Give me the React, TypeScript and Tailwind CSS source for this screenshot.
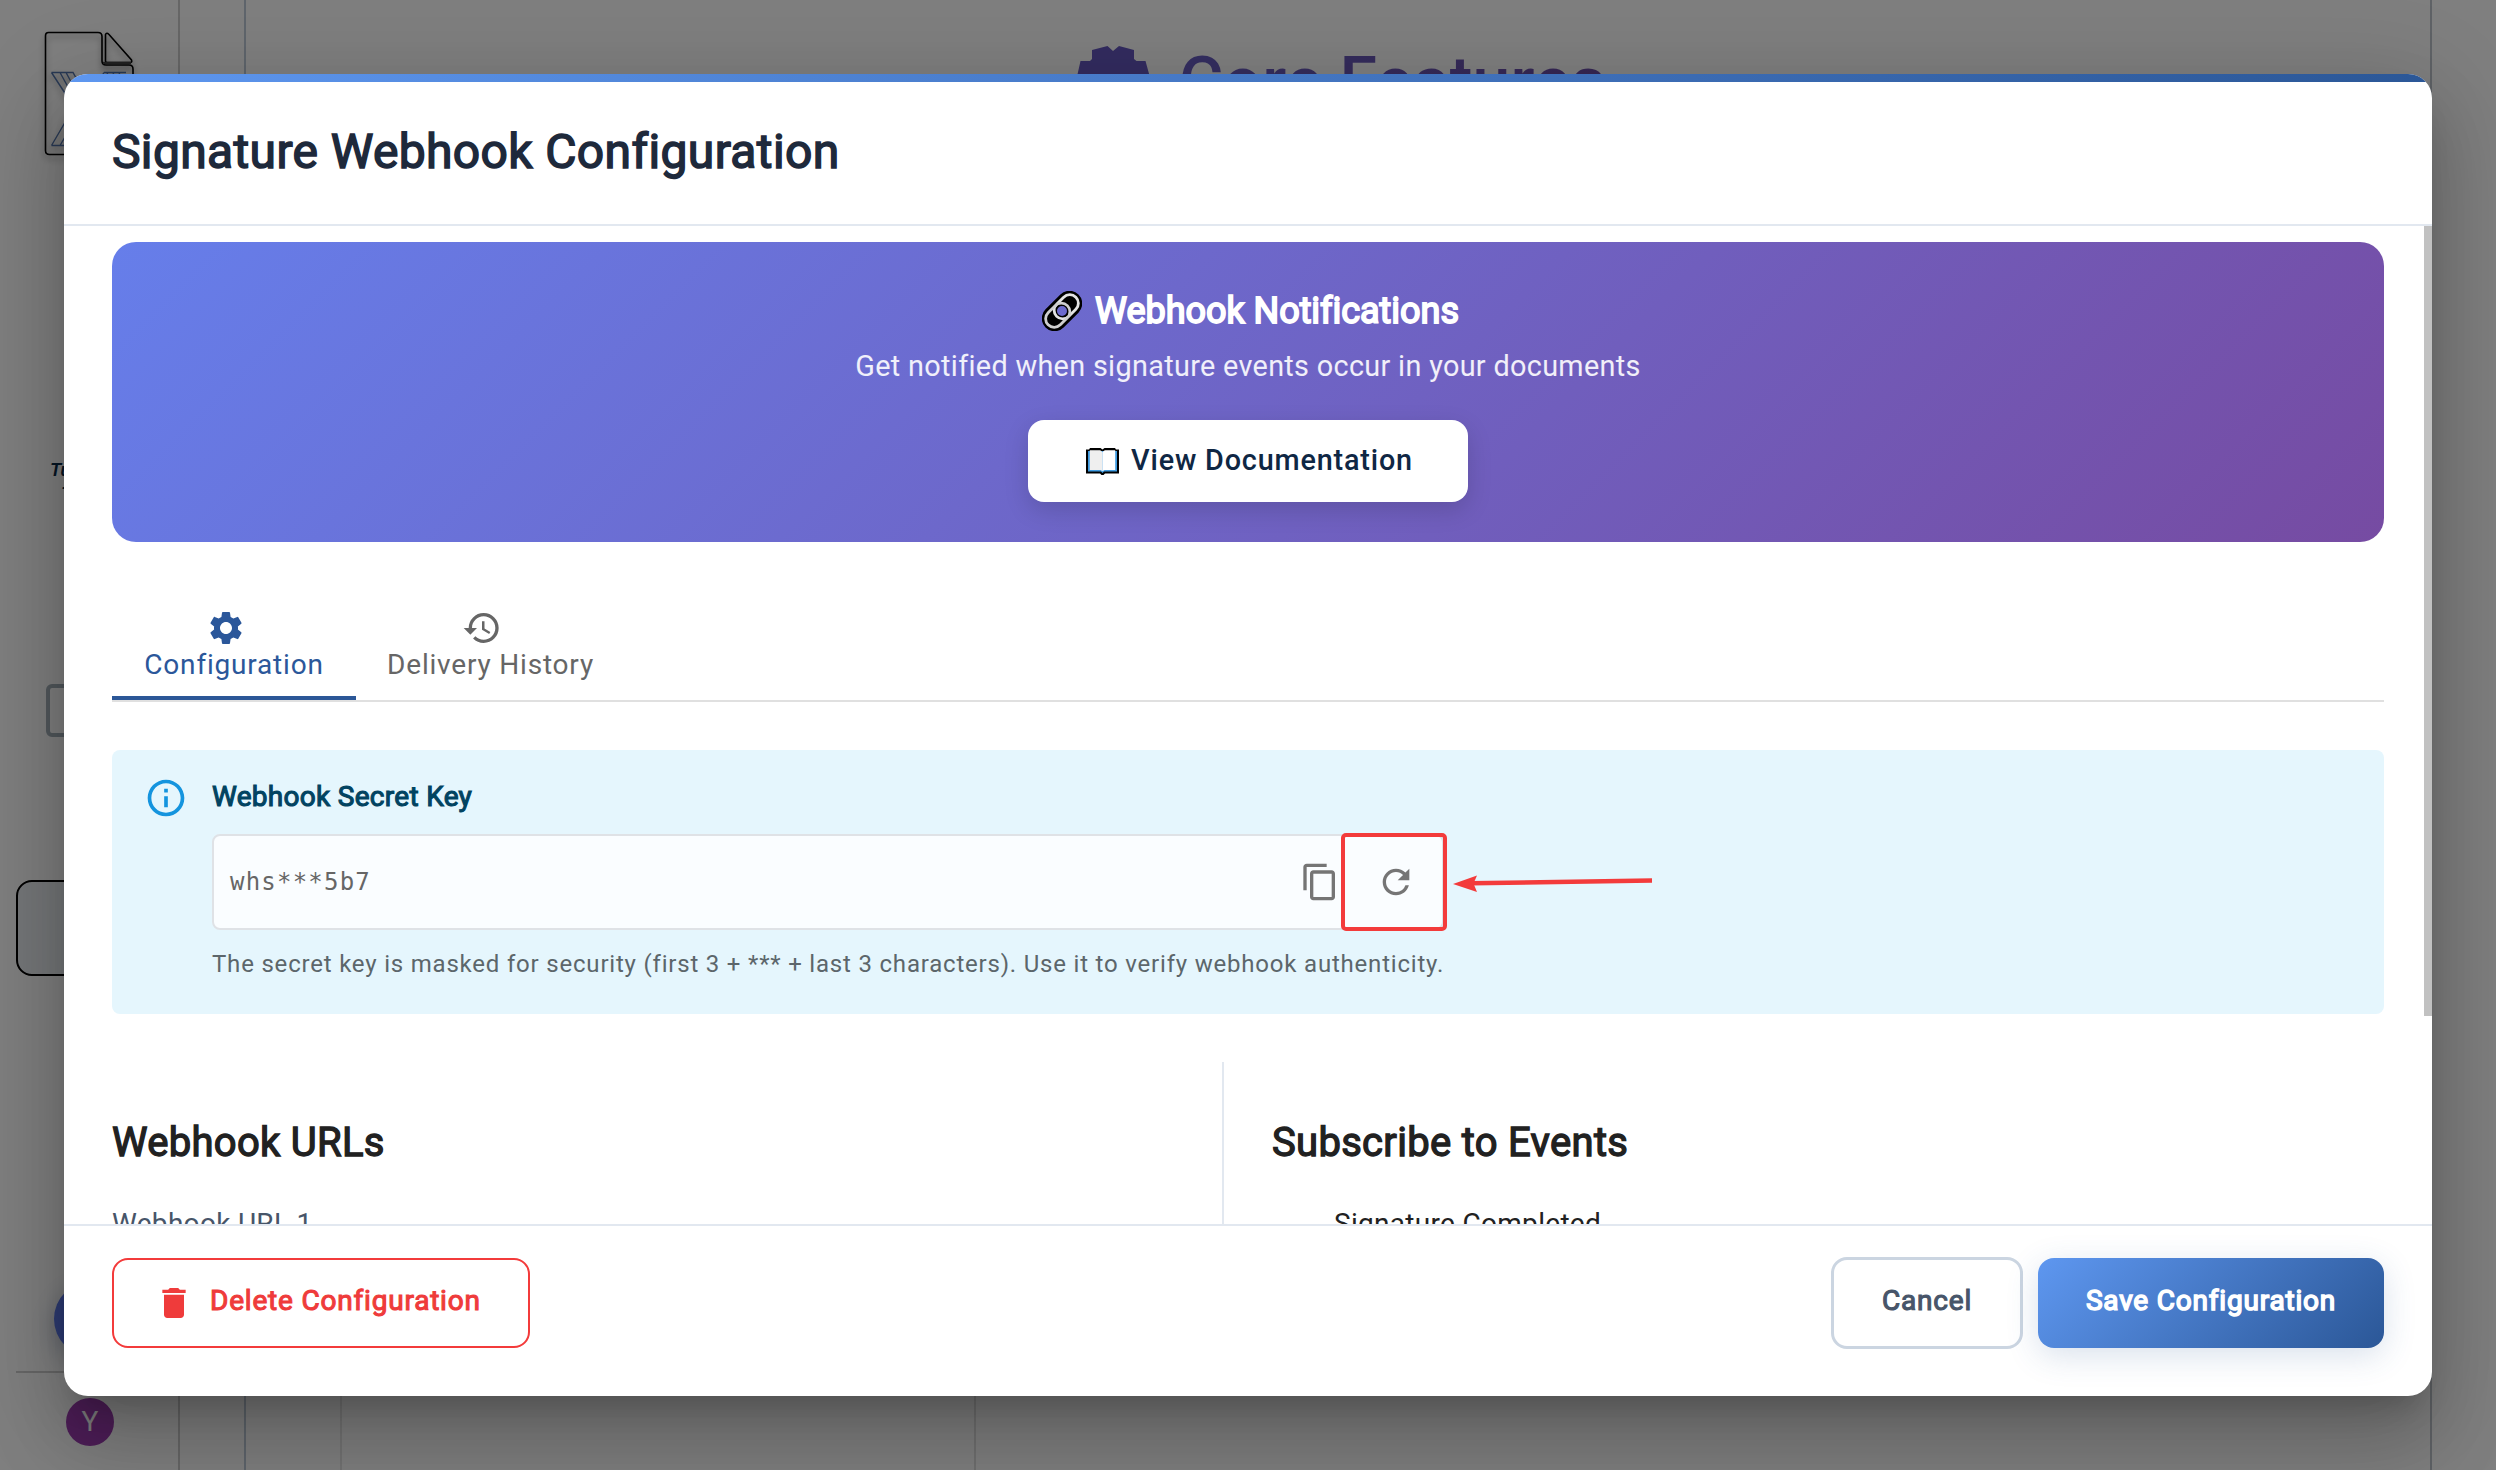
import React from "react";
import {
  MdSettings,
  MdHistory,
  MdInfoOutline,
  MdContentCopy,
  MdRefresh,
  MdDelete,
} from "react-icons/md";

function LinkEmoji() {
  return (
    <svg className="h-10 w-10" viewBox="-20 -20 40 40">
      <g transform="rotate(-45)">
        <path
          fillRule="evenodd"
          fill="#000"
          d="M-10.5 -12.8H10.5A12.8 12.8 0 0 1 10.5 12.8H-10.5A12.8 12.8 0 0 1 -10.5 -12.8ZM-5 0A5 5 0 0 0 5 0A5 5 0 0 0 -5 0Z"
        />
        <rect x="-7.6" y="-8.6" width="27.2" height="17.2" rx="8.6" fill="none" stroke="#e4e4e4" strokeWidth="2.8" />
        <rect x="-19.6" y="-8.6" width="27.2" height="17.2" rx="8.6" fill="none" stroke="#cfcfcf" strokeWidth="2.8" />
      </g>
    </svg>
  );
}

function BookEmoji() {
  return (
    <svg className="h-[27px] w-[33px]" viewBox="0 0 33 27">
      <path d="M0 1.5H3L4 0H14.500L16.500 1.500L18.500 0H29L30 1.500H33V25.500H19L17.500 27H15.500L14 25.500H0Z" fill="#000" />
      <path d="M2 3H31V23.500H18L16.500 25L15 23.500H2Z" fill="#3f9be0" />
      <path d="M3.800 2.200H14.200L16.500 4V23.200L14.500 22H3.800Z" fill="#efefef" />
      <path d="M29.200 2.200H18.800L16.500 4V23.200L18.500 22H29.200Z" fill="#fff" />
    </svg>
  );
}

function FileDrawing() {
  return (
    <svg className="h-[130px] w-[94px] drop-shadow-[0_4px_3px_rgba(0,0,0,0.4)]" viewBox="0 0 94 130" fill="none">
      <path
        d="M4.500 1.500H54Q58 1.500 58 5.500V30Q58 34 62 34H85Q89 34 89 38V120Q89 123.500 85 123.500H5.500Q1.500 123.500 1.500 119.500V5Q1.500 1.500 4.500 1.500Z"
        stroke="#000"
        strokeWidth="1.6"
      />
      <path d="M61.500 3.500Q62.500 1 65 3.500L87.500 29Q88.500 31.500 86 31.500H63Q61.500 31.500 61.500 30Z" stroke="#000" strokeWidth="1.6" />
      <path d="M59 32H87" stroke="#444" strokeWidth="2.4" />
      <path
        d="M7.500 41.500H29L56 91M7.500 41.500L30 76M16 41.500L40 85M22 41.500L44 82M60 41.500H82M64 41.500L58 52M70 41.500L63 54M76 41.500L68 56M60 41.500L56 48M7.500 114.500H30L40 95M7.500 114.500L30 76M16 114.500L34 84"
        stroke="#5273a8"
        strokeWidth="1.4"
      />
    </svg>
  );
}

function PageBehind() {
  return (
    <div className="flex h-full w-full bg-white">
      <aside className="flex w-[180px] shrink-0 flex-col border-r-2 border-[#cfcfcf]">
        <div className="ml-11 mt-[31px] h-[130px]">
          <FileDrawing />
        </div>
        <div className="ml-[50px] mt-[298px] h-[22px] text-[19px] font-semibold italic leading-[22px] text-[#0d2d4a]">Tu</div>
        <div className="ml-[61px] h-[22px] text-[19px] font-semibold italic leading-[26px] text-[#0d2d4a]">T</div>
        <div className="ml-[46px] mt-[181px] h-[53px] w-24 rounded-md border-4 border-[#a4b1b8]" />
        <div className="ml-4 mt-[143px] h-24 w-[146px] rounded-2xl border-2 border-black bg-[#ebeef3]" />
        <div className="ml-[54px] mt-[305px] h-[76px] w-[76px] rounded-full bg-[#5a77e6] shadow-[0_8px_24px_rgba(60,80,120,0.35)]" />
        <div className="ml-4 mt-3.5 border-b-2 border-[#cfcfcf]" />
        <div className="ml-[66px] mt-[25px] flex h-12 w-12 shrink-0 items-center justify-center rounded-full bg-[#9c3db0] text-[28px] text-white">
          Y
        </div>
      </aside>
      <div className="w-[66px] shrink-0 border-r-2 border-[#bfcbd8]" />
      <main className="flex w-[2186px] shrink-0 flex-col justify-between border-r-2 border-[#bfc4cd]">
        <div className="ml-[830px] mt-[45px] flex">
          <svg className="h-[72px] w-[75px]" viewBox="0 0 75 72" fill="#6659c0">
            <path d="M0 36L4.500 16H14L16 14V5L31.500 1L37 6L43 1L58 5V14L60.500 16H69.500L75 36L69 60H4.500Z" />
          </svg>
          <h1 className="ml-[28px] mt-[-3px] bg-gradient-to-r from-[#6a5fc4] to-[#6c4fa8] bg-clip-text text-[68px] font-medium leading-[80px] tracking-[0.15px] text-transparent">
            Core Features
          </h1>
        </div>
        <div className="flex h-20">
          <div className="w-[96px] border-r-2 border-[#e6e6e6]" />
          <div className="w-[634px] border-r-2 border-[#e0e0e0]" />
        </div>
      </main>
    </div>
  );
}

function Header() {
  return (
    <header className="shrink-0 border-b-2 border-[#e2e8f0]">
      <div className="h-2 bg-[linear-gradient(135deg,#5e97f0,#2b5797)]" />
      <h2 className="flex h-[142px] items-center px-12 pb-[3px] text-[48px] leading-none tracking-[0.36px] text-[#1e293b] [-webkit-text-stroke:1.5px_#1e293b]">
        Signature Webhook Configuration
      </h2>
    </header>
  );
}

function Banner() {
  return (
    <section className="flex h-[300px] flex-col items-center rounded-[24px] bg-[linear-gradient(135deg,#667eea_0%,#764ba2_100%)] pt-10 text-white">
      <h3 className="flex h-14 items-center gap-[13px] pl-[5px] pt-px text-[36px] leading-none tracking-[-0.04px] [-webkit-text-stroke:1.8px_#fff]">
        <LinkEmoji />
        Webhook Notifications
      </h3>
      <p className="mt-1.5 text-[28.8px] leading-[44px] tracking-[0.33px] text-white/90">
        Get notified when signature events occur in your documents
      </p>
      <button className="mt-8 flex h-[82px] w-[440px] items-center justify-center gap-3 rounded-2xl bg-white pl-[3px] text-[28.8px] font-medium tracking-[0.82px] text-[#0f2744] shadow-[0_8px_24px_rgba(0,0,0,0.15)]">
        <BookEmoji />
        View Documentation
      </button>
    </section>
  );
}

function Tabs() {
  return (
    <nav className="mt-[46px] flex border-b-2 border-[#e0e0e0] text-[28px] tracking-[0.8px]">
      <div className="flex h-28 w-[244px] flex-col items-center border-b-4 border-[#2b5797] pt-5 text-[#2b579a]">
        <MdSettings className="mr-4 h-10 w-10 shrink-0" />
        <span className="leading-[34px]">Configuration</span>
      </div>
      <div className="flex h-28 w-[269px] flex-col items-center pt-5 text-[#666]">
        <MdHistory className="mr-[17px] h-10 w-10 shrink-0" />
        <span className="leading-[34px]">Delivery History</span>
      </div>
    </nav>
  );
}

function SecretKey() {
  return (
    <section className="mt-12 flex h-[264px] gap-6 rounded-lg bg-[#e5f6fd] pl-8 pt-[26px]">
      <MdInfoOutline className="h-11 w-11 shrink-0 text-[#1494de]" />
      <div>
        <h4 className="text-[28px] leading-[42px] tracking-[0.29px] text-[#014361] [-webkit-text-stroke:1.1px_#014361]">
          Webhook Secret Key
        </h4>
        <div className="relative mt-4 flex h-24 w-[1232px] items-center rounded-lg border-2 border-[#dfe2e6] bg-[#fafdff] pl-4 pr-[26px] text-[#757575]">
          <span className="font-['DejaVu_Sans_Mono',monospace] text-[24px] tracking-[1.22px] text-[#666]">whs***5b7</span>
          <MdContentCopy className="ml-auto h-10 w-10" />
          <MdRefresh className="ml-9 h-10 w-10" />
          <div className="absolute -top-[3px] left-[1127px] h-[98px] w-[106px] rounded-[5px] border-4 border-[#f33b3b]" />
          <svg className="absolute left-[1239px] top-[37px] h-5 w-[202px]" viewBox="0 0 202 20">
            <path d="M199 7.500L18 10.300" stroke="#f33b3b" strokeWidth="4.600" />
            <path d="M0 11L24 2.500L20.500 10.500L24 19Z" fill="#f33b3b" />
          </svg>
        </div>
        <p className="mt-3.5 whitespace-nowrap text-[24px] leading-[41px] tracking-[0.8px] text-[#5c666b]">
          The secret key is masked for security (first 3 + *** + last 3 characters). Use it to verify webhook authenticity.
        </p>
      </div>
    </section>
  );
}

function Columns() {
  return (
    <div className="mt-12 flex text-[28px] text-[#212121]">
      <div className="h-[400px] w-[1112px] border-r-2 border-[#e2e8f0] pt-[49px]">
        <h3 className="text-[40px] leading-[64px] tracking-[0.3px] [-webkit-text-stroke:1.3px_#212121]">Webhook URLs</h3>
        <p className="mt-[29px] leading-[40px] tracking-[0.3px] text-[#475569]">Webhook URL 1</p>
      </div>
      <div className="pl-12 pt-[49px]">
        <h3 className="text-[40px] leading-[64px] tracking-[0.3px] [-webkit-text-stroke:1.3px_#212121]">Subscribe to Events</h3>
        <p className="ml-[62px] mt-[29px] leading-[40px] tracking-[0.3px]">Signature Completed</p>
      </div>
    </div>
  );
}

function Footer() {
  return (
    <footer className="flex h-[172px] shrink-0 items-start border-t-2 border-[#e2e8f0] px-12 pt-8 text-[28px] tracking-[0.8px]">
      <button className="flex h-[90px] w-[418px] items-center rounded-2xl border-2 border-[#f33b3b] pb-1 pl-10 text-[#ef3b3b] [-webkit-text-stroke:1.1px_#ef3b3b]">
        <MdDelete className="mr-4 mt-1 h-10 w-10" />
        Delete Configuration
      </button>
      <button className="-mt-px ml-auto h-[92px] w-[192px] rounded-2xl border-[3px] border-[#cbd5e1] pb-1 text-[#475569] [-webkit-text-stroke:1.1px_#475569]">
        Cancel
      </button>
      <button className="ml-[15px] h-[90px] w-[346px] rounded-2xl bg-[linear-gradient(135deg,#5e97f0,#2b5797)] pb-1 text-white shadow-[0_8px_32px_rgba(43,87,151,0.18)] [-webkit-text-stroke:1.5px_#fff]">
        Save Configuration
      </button>
    </footer>
  );
}

export default function App() {
  return (
    <div className="relative h-[1470px] w-[2496px] overflow-hidden font-['Roboto',sans-serif]">
      <PageBehind />
      <div className="absolute inset-0 flex items-center justify-center bg-black/50">
        <div className="flex h-[1322px] w-[2368px] flex-col overflow-hidden rounded-[24px] bg-white shadow-[0_22px_30px_-14px_rgba(0,0,0,0.2),0_48px_76px_6px_rgba(0,0,0,0.14),0_18px_92px_16px_rgba(0,0,0,0.12)]">
          <Header />
          <div className="relative h-[998px] shrink-0 overflow-hidden px-12 pt-4">
            <Banner />
            <Tabs />
            <SecretKey />
            <Columns />
            <div className="absolute right-0 top-0 h-[790px] w-2 bg-[#c1c1c1]" />
          </div>
          <Footer />
        </div>
      </div>
    </div>
  );
}
